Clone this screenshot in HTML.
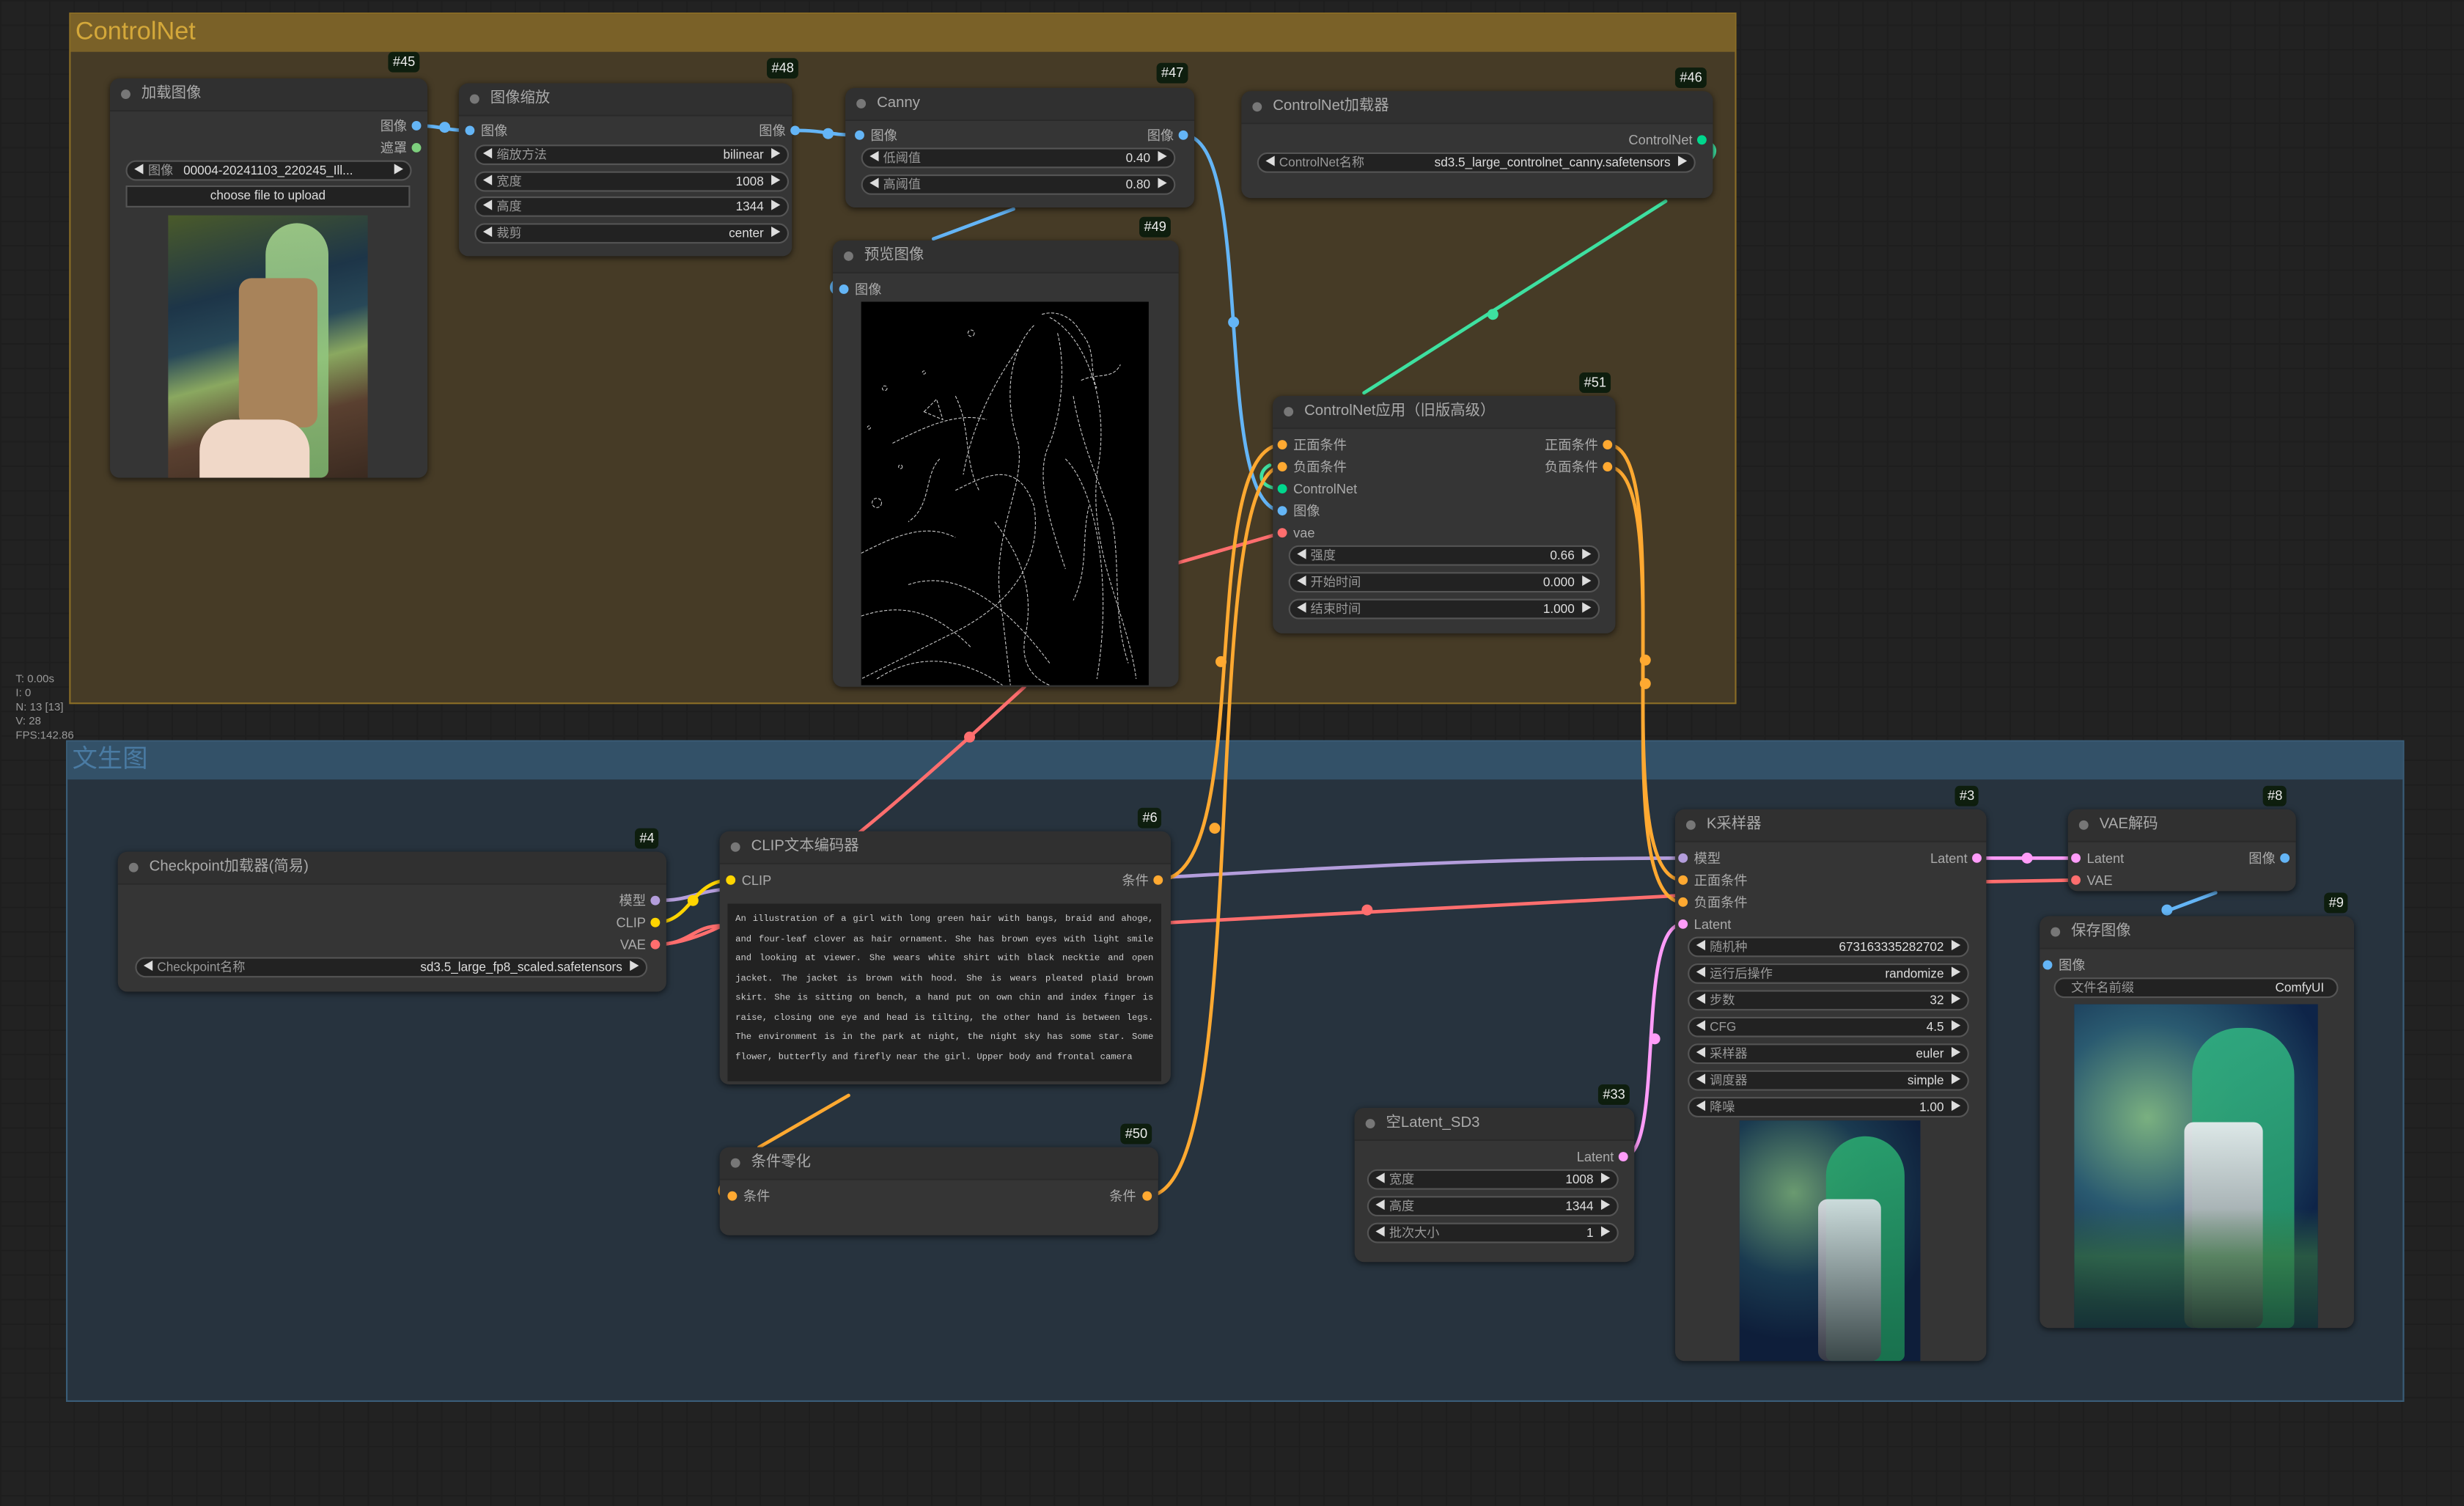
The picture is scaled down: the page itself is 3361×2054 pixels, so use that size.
<!DOCTYPE html>
<html><head><meta charset="utf-8">
<style>
html,body{margin:0;padding:0;background:#222;overflow:hidden;width:3361px;height:2054px}
#c{position:absolute;left:0;top:0;width:1568px;height:958px;transform:scale(2.14349);transform-origin:0 0;
background-color:#222;background-image:linear-gradient(#1e1e1e 1px,transparent 1px),linear-gradient(90deg,#1e1e1e 1px,transparent 1px);background-size:15.6px 15.6px;
font-family:"Liberation Sans","Noto Sans CJK SC",sans-serif;color:#aaa}
.g{position:absolute}
.gh{position:absolute;left:0;top:0;right:0;height:24px;font-size:16px;line-height:24px;padding-left:3px}
.n{position:absolute;background:#353535;border-radius:6px;box-shadow:0 1px 4px rgba(0,0,0,.6)}
.t{height:20px;background:#303030;border-radius:6px 6px 0 0;border-bottom:1px solid #2a2a2a;font-size:9.5px;line-height:20px;padding-left:20px;color:#aaa;position:relative}
.t:before{content:"";position:absolute;left:7px;top:7px;width:6px;height:6px;border-radius:50%;background:#777}
.b{position:absolute;background:#0e1e0e;color:#eee;font-size:8.5px;height:13px;line-height:13px;padding:0 3px;border-radius:3px}
.w{position:absolute;height:13px;box-sizing:border-box;border:1px solid #555;background:#222;border-radius:7px;font-size:8px;line-height:11px;display:flex;padding:0 4px;color:#999;white-space:nowrap;overflow:hidden}
.w .l{flex:1;overflow:hidden;margin-left:2px}
.w .v{color:#ddd;margin-right:4px}
.w .a{color:#ddd;font-size:7px}
.s{position:absolute;font-size:8.5px;line-height:12px;color:#aaa;white-space:nowrap}
.d{position:absolute;width:6px;height:6px;border-radius:50%}
.bl{background:#64b5f6}.gr{background:#7dcf7d}.or{background:#ffa931}.re{background:#ff6e6e}.ye{background:#ffd500}.la{background:#b39ddb}.pk{background:#ff9cf9}.tl{background:#00d78d}
.img{position:absolute}
</style></head><body><div id="c">

<div class="g" style="left:44px;top:8px;width:1061px;height:440px;background:#463b26;border:1px solid #8a6d26;box-sizing:border-box">
<div class="gh" style="background:#7a6128;color:#d4a83a">ControlNet</div></div>
<div class="g" style="left:42px;top:471px;width:1488px;height:421px;background:#27333e;border:1px solid #3a5d78;box-sizing:border-box">
<div class="gh" style="background:#335168;color:#4a7ba3">文生图</div></div>

<div class="s" style="left:10px;top:428px;font-size:7px;line-height:9px;color:#999">T: 0.00s<br>I: 0<br>N: 13 [13]<br>V: 28<br>FPS:142.86</div>

<svg class="g" style="left:0;top:0" width="1568" height="958" fill="none" stroke-width="2.2" stroke-linecap="round">
<path stroke="#64b5f6" d="M265 80 C282 80 282 83 299 83"/>
<path stroke="#64b5f6" d="M506 83 C526 83 527 86 547 86"/>
<path stroke="#64b5f6" d="M753 86 C800 86 770 325 816 325"/>
<path stroke="#64b5f6" d="M645 133 L594 152"/>
<path stroke="#64b5f6" d="M533 178 C528 180 528 186 533 187"/>
<path stroke="#64b5f6" d="M1410 568 L1378 580"/>
<path stroke="#3ee0a0" d="M1083 89 C1095 92 1092 100 1085 104"/>
<path stroke="#3ee0a0" d="M1060 128 L868 250"/>
<path stroke="#3ee0a0" d="M816 311 C800 311 800 300 808 296"/>
<path stroke="#ff6e6e" d="M417 601 C470 601 560 520 617 469 L652 437"/>
<path stroke="#ff6e6e" d="M750 358 L816 339"/>
<path stroke="#ff6e6e" d="M417 601 C440 601 440 589 460 589 M745 587 L1066 570 M1264 561 L1321 560"/>
<path stroke="#b39ddb" d="M417 573 C440 573 440 568 460 566 M745 558 C850 552 950 546 1071 546"/>
<path stroke="#ffd500" d="M417 587 C440 587 440 560 465 560"/>
<path stroke="#ffa931" d="M737 560 C800 560 760 283 816 283"/>
<path stroke="#ffa931" d="M730 761 C800 761 760 297 816 297"/>
<path stroke="#ffa931" d="M1023 283 C1070 283 1020 560 1071 560"/>
<path stroke="#ffa931" d="M1023 297 C1070 297 1020 574 1071 574"/>
<path stroke="#ffa931" d="M540 697 L483 730 M462 752 C455 756 458 764 466 761"/>
<path stroke="#ff9cf9" d="M1033 736 C1060 736 1040 588 1071 588"/>
<path stroke="#ff9cf9" d="M1258 546 L1321 546"/>
<g stroke="none">
<circle cx="283" cy="81" r="3.5" fill="#64b5f6"/><circle cx="527" cy="85" r="3.5" fill="#64b5f6"/><circle cx="785" cy="205" r="3.5" fill="#64b5f6"/>
<circle cx="950" cy="200" r="3.5" fill="#3ee0a0"/><circle cx="617" cy="469" r="3.5" fill="#ff6e6e"/><circle cx="870" cy="579" r="3.5" fill="#ff6e6e"/>
<circle cx="441" cy="573" r="3.5" fill="#ffd500"/><circle cx="777" cy="421" r="3.5" fill="#ffa931"/><circle cx="773" cy="527" r="3.5" fill="#ffa931"/>
<circle cx="1047" cy="420" r="3.5" fill="#ffa931"/><circle cx="1047" cy="435" r="3.5" fill="#ffa931"/><circle cx="1053" cy="661" r="3.5" fill="#ff9cf9"/>
<circle cx="1290" cy="546" r="3.5" fill="#ff9cf9"/><circle cx="1379" cy="579" r="3.5" fill="#64b5f6"/>
</g>
</svg>

<div class="b" style="left:247px;top:33px">#45</div>
<div class="n" style="left:70px;top:50px;width:202px;height:254px"><div class="t">加载图像</div></div>
<div class="d bl" style="left:262px;top:77px"></div><div class="s" style="right:1309px;top:74px">图像</div>
<div class="d gr" style="left:262px;top:91px"></div><div class="s" style="right:1309px;top:88px">遮罩</div>
<div class="w" style="left:80px;top:102px;width:182px"><span class="a">◀</span>&nbsp;图像&nbsp;&nbsp;<span class="l" style="color:#ddd">00004-20241103_220245_Ill...</span><span class="a">▶</span></div>
<div class="s" style="left:80px;top:118px;width:181px;height:14px;box-sizing:border-box;border:1px solid #555;background:#222;text-align:center;color:#ddd;font-size:8px;line-height:12px">choose file to upload</div>
<div class="img" style="left:107px;top:137px;width:127px;height:167px;overflow:hidden;background:linear-gradient(165deg,#4a5a2a 0%,#1d3548 30%,#284858 45%,#8aa860 58%,#5a4030 75%,#3a2a20 100%)">
<div style="position:absolute;left:62px;top:5px;width:40px;height:162px;background:linear-gradient(#a8d890,#7eb870);border-radius:20px 20px 5px 5px;opacity:.85"></div>
<div style="position:absolute;left:45px;top:40px;width:50px;height:95px;background:#a8835a;border-radius:8px"></div>
<div style="position:absolute;left:20px;top:130px;width:70px;height:37px;background:#f0d8c8;border-radius:20px 20px 0 0"></div></div>

<div class="b" style="left:488px;top:37px">#48</div>
<div class="n" style="left:292px;top:53px;width:212px;height:110px"><div class="t">图像缩放</div></div>
<div class="d bl" style="left:296px;top:80px"></div><div class="s" style="left:306px;top:77px">图像</div>
<div class="d bl" style="left:503px;top:80px"></div><div class="s" style="right:1068px;top:77px">图像</div>
<div class="w" style="left:302px;top:92px;width:200px"><span class="a">◀</span><span class="l">缩放方法</span><span class="v">bilinear</span><span class="a">▶</span></div>
<div class="w" style="left:302px;top:109px;width:200px"><span class="a">◀</span><span class="l">宽度</span><span class="v">1008</span><span class="a">▶</span></div>
<div class="w" style="left:302px;top:125px;width:200px"><span class="a">◀</span><span class="l">高度</span><span class="v">1344</span><span class="a">▶</span></div>
<div class="w" style="left:302px;top:142px;width:200px"><span class="a">◀</span><span class="l">裁剪</span><span class="v">center</span><span class="a">▶</span></div>

<div class="b" style="left:736px;top:40px">#47</div>
<div class="n" style="left:538px;top:56px;width:222px;height:76px"><div class="t">Canny</div></div>
<div class="d bl" style="left:544px;top:83px"></div><div class="s" style="left:554px;top:80px">图像</div>
<div class="d bl" style="left:750px;top:83px"></div><div class="s" style="right:821px;top:80px">图像</div>
<div class="w" style="left:548px;top:94px;width:200px"><span class="a">◀</span><span class="l">低阈值</span><span class="v">0.40</span><span class="a">▶</span></div>
<div class="w" style="left:548px;top:111px;width:200px"><span class="a">◀</span><span class="l">高阈值</span><span class="v">0.80</span><span class="a">▶</span></div>

<div class="b" style="left:1066px;top:43px">#46</div>
<div class="n" style="left:790px;top:58px;width:300px;height:68px"><div class="t">ControlNet加载器</div></div>
<div class="d tl" style="left:1080px;top:86px"></div><div class="s" style="right:491px;top:83px">ControlNet</div>
<div class="w" style="left:800px;top:97px;width:279px"><span class="a">◀</span><span class="l">ControlNet名称</span><span class="v">sd3.5_large_controlnet_canny.safetensors</span><span class="a">▶</span></div>

<div class="b" style="left:725px;top:138px">#49</div>
<div class="n" style="left:530px;top:153px;width:220px;height:284px"><div class="t">预览图像</div></div>
<div class="d bl" style="left:534px;top:181px"></div><div class="s" style="left:544px;top:178px">图像</div>
<div class="img" style="left:548px;top:192px;width:183px;height:244px;background:#000">
<svg width="183" height="244" fill="none" stroke="#ccc" stroke-width=".5" stroke-dasharray="2 1">
<path d="M120 10 C140 20 160 60 150 110 C145 160 170 200 175 240"/><path d="M110 15 C95 30 90 60 100 90 C105 120 80 150 90 200 L95 244"/>
<path d="M125 20 C130 40 128 70 120 90 C110 110 120 140 130 170"/><path d="M60 120 C80 110 100 100 110 130 C115 160 100 190 60 210 C40 220 20 230 0 240"/>
<path d="M20 90 C40 80 60 70 80 75"/><path d="M30 180 C60 170 90 190 120 230"/><path d="M140 50 C150 45 160 50 165 40"/>
<path d="M0 160 C20 150 40 140 60 150"/><circle cx="70" cy="20" r="2"/><circle cx="15" cy="55" r="1.5"/><circle cx="10" cy="128" r="3"/>
<path d="M40 70 L48 62 L52 75 Z"/><path d="M130 100 C150 120 160 180 150 240"/>
<path d="M115 8 C125 5 135 10 140 20 C150 30 145 45 150 55"/><path d="M100 30 C85 50 70 80 65 110"/><path d="M135 60 C140 90 150 110 160 140 C165 170 160 200 170 230"/>
<path d="M85 140 C100 160 110 180 105 210 C100 230 110 240 120 244"/><path d="M0 200 C30 190 50 200 70 220"/><path d="M10 240 C40 220 70 230 90 244"/>
<path d="M60 60 C70 80 65 100 75 120"/><path d="M145 130 C140 150 145 170 135 190"/><path d="M50 100 C40 110 45 130 30 140"/>
<circle cx="40" cy="45" r="1"/><circle cx="5" cy="80" r="1"/><circle cx="25" cy="105" r="1.2"/></svg></div>

<div class="b" style="left:1005px;top:237px">#51</div>
<div class="n" style="left:810px;top:252px;width:218px;height:151px"><div class="t">ControlNet应用（旧版高级）</div></div>
<div class="d or" style="left:813px;top:280px"></div><div class="s" style="left:823px;top:277px">正面条件</div>
<div class="d or" style="left:813px;top:294px"></div><div class="s" style="left:823px;top:291px">负面条件</div>
<div class="d tl" style="left:813px;top:308px"></div><div class="s" style="left:823px;top:305px">ControlNet</div>
<div class="d bl" style="left:813px;top:322px"></div><div class="s" style="left:823px;top:319px">图像</div>
<div class="d re" style="left:813px;top:336px"></div><div class="s" style="left:823px;top:333px">vae</div>
<div class="d or" style="left:1020px;top:280px"></div><div class="s" style="right:551px;top:277px">正面条件</div>
<div class="d or" style="left:1020px;top:294px"></div><div class="s" style="right:551px;top:291px">负面条件</div>
<div class="w" style="left:820px;top:347px;width:198px"><span class="a">◀</span><span class="l">强度</span><span class="v">0.66</span><span class="a">▶</span></div>
<div class="w" style="left:820px;top:364px;width:198px"><span class="a">◀</span><span class="l">开始时间</span><span class="v">0.000</span><span class="a">▶</span></div>
<div class="w" style="left:820px;top:381px;width:198px"><span class="a">◀</span><span class="l">结束时间</span><span class="v">1.000</span><span class="a">▶</span></div>

<div class="b" style="left:404px;top:527px">#4</div>
<div class="n" style="left:75px;top:542px;width:349px;height:89px"><div class="t">Checkpoint加载器(简易)</div></div>
<div class="d la" style="left:414px;top:570px"></div><div class="s" style="right:1157px;top:567px">模型</div>
<div class="d ye" style="left:414px;top:584px"></div><div class="s" style="right:1157px;top:581px">CLIP</div>
<div class="d re" style="left:414px;top:598px"></div><div class="s" style="right:1157px;top:595px">VAE</div>
<div class="w" style="left:86px;top:609px;width:326px"><span class="a">◀</span><span class="l">Checkpoint名称</span><span class="v">sd3.5_large_fp8_scaled.safetensors</span><span class="a">▶</span></div>

<div class="b" style="left:724px;top:514px">#6</div>
<div class="n" style="left:458px;top:529px;width:287px;height:161px"><div class="t">CLIP文本编码器</div></div>
<div class="d ye" style="left:462px;top:557px"></div><div class="s" style="left:472px;top:554px">CLIP</div>
<div class="d or" style="left:734px;top:557px"></div><div class="s" style="right:837px;top:554px">条件</div>
<div class="s" style="left:463px;top:575px;width:276px;height:113px;background:#222;box-sizing:border-box;padding:4px 5px;font-family:'Liberation Mono',monospace;font-size:5.7px;line-height:12.5px;color:#ccc;white-space:normal;text-align:justify">An illustration of a girl with long green hair with bangs, braid and ahoge, and four-leaf clover as hair ornament. She has brown eyes with light smile and looking at viewer. She wears white shirt with black necktie and open jacket. The jacket is brown with hood. She is wears pleated plaid brown skirt. She is sitting on bench, a hand put on own chin and index finger is raise, closing one eye and head is tilting, the other hand is between legs. The environment is in the park at night, the night sky has some star. Some flower, butterfly and firefly near the girl. Upper body and frontal camera</div>

<div class="b" style="left:713px;top:715px">#50</div>
<div class="n" style="left:458px;top:730px;width:279px;height:56px"><div class="t">条件零化</div></div>
<div class="d or" style="left:463px;top:758px"></div><div class="s" style="left:473px;top:755px">条件</div>
<div class="d or" style="left:727px;top:758px"></div><div class="s" style="right:845px;top:755px">条件</div>

<div class="b" style="left:1017px;top:690px">#33</div>
<div class="n" style="left:862px;top:705px;width:178px;height:98px"><div class="t">空Latent_SD3</div></div>
<div class="d pk" style="left:1030px;top:733px"></div><div class="s" style="right:541px;top:730px">Latent</div>
<div class="w" style="left:870px;top:744px;width:160px"><span class="a">◀</span><span class="l">宽度</span><span class="v">1008</span><span class="a">▶</span></div>
<div class="w" style="left:870px;top:761px;width:160px"><span class="a">◀</span><span class="l">高度</span><span class="v">1344</span><span class="a">▶</span></div>
<div class="w" style="left:870px;top:778px;width:160px"><span class="a">◀</span><span class="l">批次大小</span><span class="v">1</span><span class="a">▶</span></div>

<div class="b" style="left:1244px;top:500px">#3</div>
<div class="n" style="left:1066px;top:515px;width:198px;height:351px"><div class="t">K采样器</div></div>
<div class="d la" style="left:1068px;top:543px"></div><div class="s" style="left:1078px;top:540px">模型</div>
<div class="d or" style="left:1068px;top:557px"></div><div class="s" style="left:1078px;top:554px">正面条件</div>
<div class="d or" style="left:1068px;top:571px"></div><div class="s" style="left:1078px;top:568px">负面条件</div>
<div class="d pk" style="left:1068px;top:585px"></div><div class="s" style="left:1078px;top:582px">Latent</div>
<div class="d pk" style="left:1255px;top:543px"></div><div class="s" style="right:316px;top:540px">Latent</div>
<div class="w" style="left:1074px;top:596px;width:179px"><span class="a">◀</span><span class="l">随机种</span><span class="v">673163335282702</span><span class="a">▶</span></div>
<div class="w" style="left:1074px;top:613px;width:179px"><span class="a">◀</span><span class="l">运行后操作</span><span class="v">randomize</span><span class="a">▶</span></div>
<div class="w" style="left:1074px;top:630px;width:179px"><span class="a">◀</span><span class="l">步数</span><span class="v">32</span><span class="a">▶</span></div>
<div class="w" style="left:1074px;top:647px;width:179px"><span class="a">◀</span><span class="l">CFG</span><span class="v">4.5</span><span class="a">▶</span></div>
<div class="w" style="left:1074px;top:664px;width:179px"><span class="a">◀</span><span class="l">采样器</span><span class="v">euler</span><span class="a">▶</span></div>
<div class="w" style="left:1074px;top:681px;width:179px"><span class="a">◀</span><span class="l">调度器</span><span class="v">simple</span><span class="a">▶</span></div>
<div class="w" style="left:1074px;top:698px;width:179px"><span class="a">◀</span><span class="l">降噪</span><span class="v">1.00</span><span class="a">▶</span></div>
<div class="img" style="left:1107px;top:713px;width:115px;height:153px;overflow:hidden;background:radial-gradient(circle at 30% 30%,#6a9a70 0,#1a3a50 40%,#0e1e3a 70%),#102040">
<div style="position:absolute;left:55px;top:10px;width:50px;height:143px;background:linear-gradient(#2aa870,#1a7a50);border-radius:25px 25px 4px 4px;opacity:.9"></div>
<div style="position:absolute;left:50px;top:50px;width:40px;height:103px;background:linear-gradient(#e8e8f0,#404048);border-radius:6px;opacity:.85"></div></div>

<div class="b" style="left:1440px;top:500px">#8</div>
<div class="n" style="left:1316px;top:515px;width:145px;height:52px"><div class="t">VAE解码</div></div>
<div class="d pk" style="left:1318px;top:543px"></div><div class="s" style="left:1328px;top:540px">Latent</div>
<div class="d re" style="left:1318px;top:557px"></div><div class="s" style="left:1328px;top:554px">VAE</div>
<div class="d bl" style="left:1451px;top:543px"></div><div class="s" style="right:120px;top:540px">图像</div>

<div class="b" style="left:1479px;top:568px">#9</div>
<div class="n" style="left:1298px;top:583px;width:200px;height:262px"><div class="t">保存图像</div></div>
<div class="d bl" style="left:1300px;top:611px"></div><div class="s" style="left:1310px;top:608px">图像</div>
<div class="w" style="left:1307px;top:622px;width:181px;padding:0 8px"><span class="l">文件名前缀</span><span class="v" style="margin:0">ComfyUI</span></div>
<div class="img" style="left:1320px;top:639px;width:155px;height:206px;overflow:hidden;background:radial-gradient(circle at 30% 35%,#7ab080 0,#2a5a70 35%,#0e2448 70%),#0e2040">
<div style="position:absolute;left:75px;top:15px;width:65px;height:191px;background:linear-gradient(#30b080,#208a60);border-radius:30px 30px 4px 4px;opacity:.9"></div>
<div style="position:absolute;left:70px;top:75px;width:50px;height:131px;background:linear-gradient(#f0f0f4,#a0a0a8 60%,#3a3a40);border-radius:6px;opacity:.9"></div>
<div style="position:absolute;left:0;top:130px;width:155px;height:76px;background:linear-gradient(transparent,#3a7a40 40%,#1a3a2a);opacity:.6"></div></div>

</div></body></html>
